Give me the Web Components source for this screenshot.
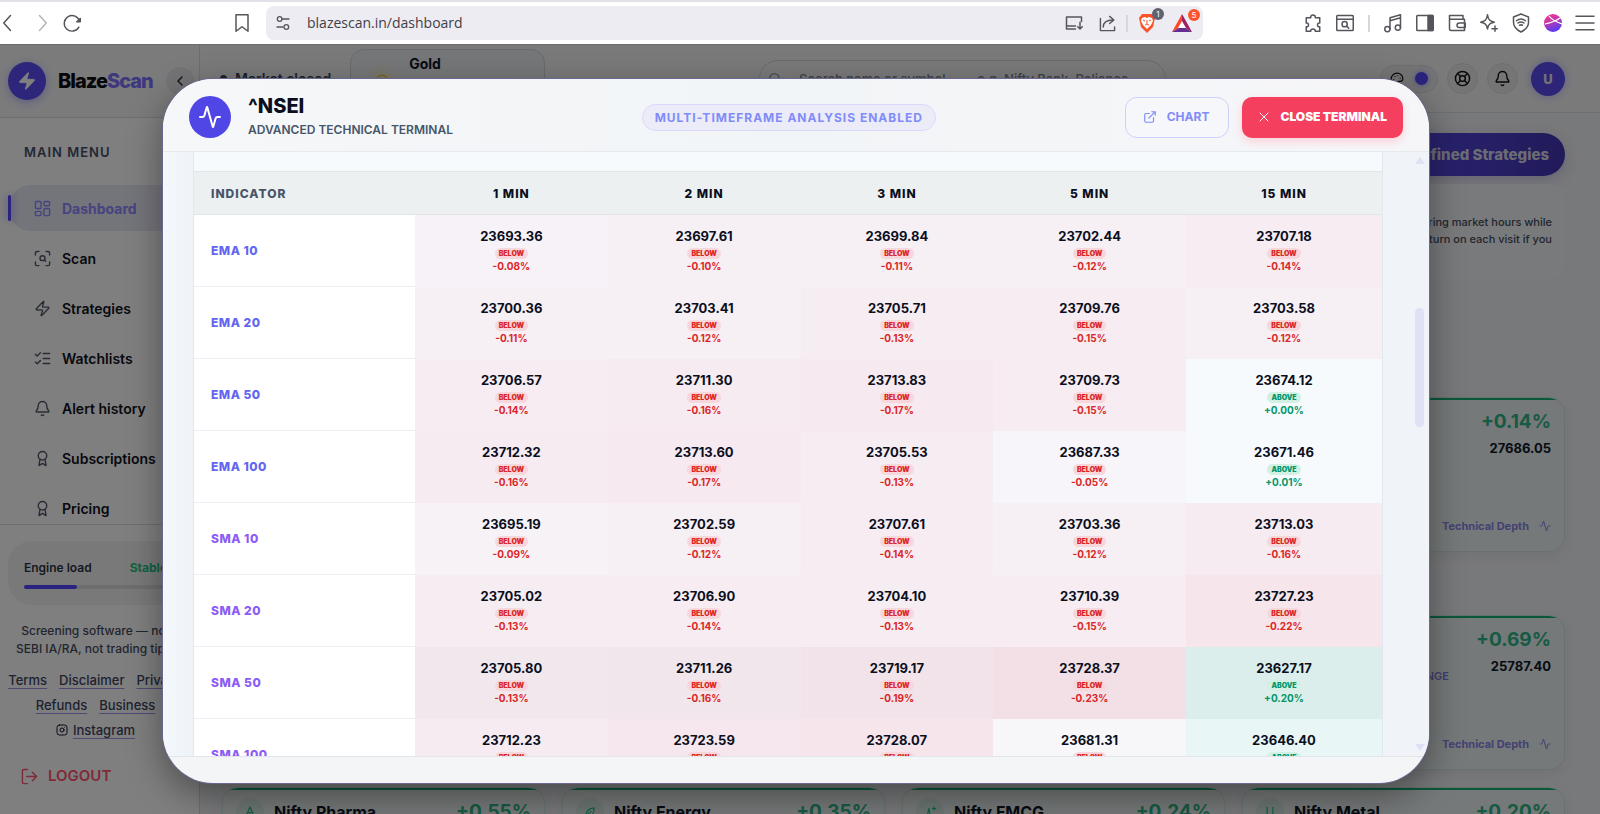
<!DOCTYPE html>
<html lang="en">
<head>
<meta charset="utf-8">
<meta name="viewport" content="width=device-width, initial-scale=1">
<title>BlazeScan</title>
<style>
    html, body {
        margin: 0;
        height: 100%;
    }

    body {
        display: flex;
        flex-direction: column;
        overflow: hidden;
        font-family: Inter, "Liberation Sans", sans-serif;
        color: #0f172a;
        background: #fff;
    }

    .app {
        position: relative;
        flex: 1;
        min-height: 0;
        display: flex;
        overflow: hidden;
        border-top: 1px solid #6d6d70;
    }

    market-page {
        flex: 1;
    }
</style>
</head>
<body>
    <browser-bar></browser-bar>
    <div class="app">
        <side-bar></side-bar>
        <market-page></market-page>
        <terminal-dialog symbol="^NSEI">
            <indicator-table></indicator-table>
        </terminal-dialog>
    </div>

<script>
const ICONS = {
    bolt: '<path d="M4 14a1 1 0 0 1-.78-1.63l9.9-10.2a.5.5 0 0 1 .86.46l-1.92 6.02A1 1 0 0 0 13 10h7a1 1 0 0 1 .78 1.63l-9.9 10.2a.5.5 0 0 1-.86-.46l1.92-6.02A1 1 0 0 0 11 14z"/>',
    left: '<path d="m15 18-6-6 6-6"/>',
    dashboard: '<rect x="2" y="2" width="8" height="10" rx="1.5"/><rect x="14" y="2" width="8" height="6" rx="1.5"/><rect x="14" y="12" width="8" height="10" rx="1.5"/><rect x="2" y="16" width="8" height="6" rx="1.5"/>',
    scan: '<path d="M2 7V4a2 2 0 0 1 2-2h3M17 2h3a2 2 0 0 1 2 2v3M22 17v3a2 2 0 0 1-2 2h-3M7 22H4a2 2 0 0 1-2-2v-3"/><circle cx="12" cy="11.500" r="3.500"/><path d="m16.500 16-2-2"/>',
    checks: '<path d="m2 17 2.500 2.500L9 15M2 6l2.500 2.500L9 4M13 5h9M13 12h9M13 19h9"/>',
    bell: '<path d="M10.268 21a2 2 0 0 0 3.464 0"/><path d="M3.262 15.326A1 1 0 0 0 4 17h16a1 1 0 0 0 .740-1.673C19.410 13.956 18 12.499 18 8A6 6 0 0 0 6 8c0 4.499-1.411 5.956-2.738 7.326"/>',
    award: '<circle cx="12" cy="8" r="6"/><path d="m8.500 13-1.500 9 5-3 5 3-1.500-9"/>',
    instagram: '<rect x="2" y="2" width="20" height="20" rx="5"/><circle cx="12" cy="12" r="4"/><path d="M17.500 6.500h.01"/>',
    logout: '<path d="M9 2H4a2 2 0 0 0-2 2v16a2 2 0 0 0 2 2h5M8 12h14M16 6l6 6-6 6"/>',
    pulse: '<path d="M22 12h-2.480a2 2 0 0 0-1.930 1.460l-2.350 8.360a.25.25 0 0 1-.48 0L9.240 2.180a.25.25 0 0 0-.48 0l-2.350 8.360A2 2 0 0 1 4.490 12H2"/>',
    external: '<path d="M15 3h6v6M10 14 21 3M18 13v6a2 2 0 0 1-2 2H5a2 2 0 0 1-2-2V8a2 2 0 0 1 2-2h6"/>',
    close: '<path d="M20 4 4 20M4 4l16 16"/>',
    search: '<circle cx="11" cy="11" r="8"/><path d="m21 21-4.300-4.300"/>',
    coin: '<circle cx="12" cy="12" r="10"/><path d="M12 7v10"/>',
    palette: '<path d="M12 2a10 10 0 0 0 0 20c1.200 0 2-.8 2-1.900 0-1.500-1-1.600-1-2.700 0-1 .8-1.400 1.800-1.400H17a5 5 0 0 0 5-5c0-5-4.500-9-10-9z"/><path d="M13.500 6.500h.01M17.500 10.500h.01M8.500 7.500h.01M6.500 12.500h.01"/>',
    buoy: '<circle cx="12" cy="12" r="10"/><circle cx="12" cy="12" r="4"/><path d="m5 5 4.200 4.200M14.800 9.200 19 5M14.800 14.800 19 19M9.200 14.800 5 19"/>',
    leaf: '<path d="M5 19c0-9 5-13 14-14 0 9-4 14-10 14-3 0-4-2-4-4M5 21c2-6 5-8 9-10"/>',
    peak: '<path d="M12 3 5 20M12 3l7 17M8 13h8"/>',
    sparkle: '<path d="M10 6 7 20M10 6l3 14M19 3v6M16 6h6"/>',
    tool: '<path d="M7 4v9a5 5 0 0 0 10 0V4"/>',
    back: '<path d="m14 2-9 10 9 10"/>',
    forward: '<path d="m10 2 9 10-9 10"/>',
    reload: '<path d="M21 17a11 11 0 1 1 1-8"/><path d="M18 9.500h5V5z" fill="currentColor"/>',
    bookmark: '<path d="M4 1h16v22l-8-6-8 6z"/>',
    tune: '<circle cx="7" cy="6" r="3.500"/><path d="M11 6h10M3 18h9"/><circle cx="17" cy="18" r="3.500"/>',
    install: '<path d="M22 10V4H2v16h12M2 16h12M20 11v9M17 17l3 3 3-3"/>',
    share: '<path d="M2 5v17h20v-5M6 17c0-7 5-10 14-10M15 2l6 5-6 5"/>',
    puzzle: '<path d="M3 5h6c-1-5 7-5 6 0h6v7c-4-1-4 6 0 5v6h-6c1-4-7-4-6 0H3v-6c4 1 4-6 0-5z"/>',
    finder: '<rect x="1" y="2" width="22" height="20" rx="1"/><path d="M1 7h22"/><circle cx="11.500" cy="13.500" r="3.500"/><path d="m14 16 3 3"/>',
    music: '<circle cx="4.500" cy="20" r="3.500"/><circle cx="18.500" cy="18" r="3.500"/><path d="M8 20V5l14-4v17M8 9l14-4"/>',
    panel: '<rect x="1" y="2" width="22" height="20" rx="1"/><path d="M16 2h6v20h-6z" fill="currentColor"/>',
    wallet: '<path d="M20 7V2H2v18q0 2 2 2h18V7H2M23 12h-8a3 3 0 0 0 0 6h8z"/>',
    stars: '<path d="M10 1c1 7 3 8 9 10-6 1-8 3-9 9-1-6-3-8-9-9 6-2 8-3 9-10zM20 16v7M16 19.500h7"/>',
    shield: '<path d="M12 0 22 4v7c0 6-4 10-10 13C6 21 2 17 2 11V4zM6 9c4-3 8-3 12 0M8 12c3-2 5-2 8 0M10 15c2-1 2-1 4 0"/>',
    menu: '<path d="M0 3h24M0 12h24M0 21h24"/>'
};

class UiIcon extends HTMLElement {
    constructor() {
        super();
        this.attachShadow({ mode: 'open' });
    }

    connectedCallback() {
        const size = this.getAttribute('size') || 16;
        this.shadowRoot.innerHTML = `
            <style>
                :host { display: inline-flex; flex: none; }
                svg { display: block; overflow: visible; }
            </style>
            <svg width="${size}" height="${size}" viewBox="0 0 24 24" aria-hidden="true"
                fill="${this.getAttribute('fill') || 'none'}" stroke="currentColor"
                stroke-width="${this.getAttribute('weight') || 2}"
                stroke-linecap="round" stroke-linejoin="round">${ICONS[this.getAttribute('name')]}</svg>
        `;
    }
}

customElements.define('ui-icon', UiIcon);

class BrowserBar extends HTMLElement {
    constructor() {
        super();
        this.attachShadow({ mode: 'open' }).innerHTML = `
            <style>
                :host {
                    display: flex;
                    align-items: center;
                    gap: 14px;
                    box-sizing: border-box;
                    height: 44px;
                    padding-right: 6px;
                    border-top: 2px solid #e1e1e8;
                    background: #fff;
                    color: #55565c;
                }
                button {
                    display: flex;
                    padding: 0;
                    border: 0;
                    background: none;
                    color: inherit;
                }
                button:disabled { color: #b4b5ba; }
                .mark { margin-left: 138px; }
                .address {
                    flex: 1;
                    display: flex;
                    align-items: center;
                    gap: 16px;
                    height: 34px;
                    margin: 0 87px 0 1px;
                    padding: 0 11px 0 9px;
                    border-radius: 8px;
                    background: #edecf2;
                }
                input {
                    flex: 1;
                    min-width: 0;
                    padding: 0;
                    border: 0;
                    outline: 0;
                    background: none;
                    color: #3f4047;
                    font: 14px/20px "Open Sans", "Noto Sans", sans-serif;
                }
                .rule {
                    width: 2px;
                    height: 17px;
                    background: #d6d6dd;
                }
                .address .rule { margin: 0 -6px; }
                .badged { position: relative; }
                .badged span {
                    position: absolute;
                    top: -5px;
                    right: -8px;
                    width: 12px;
                    height: 12px;
                    border-radius: 6px;
                    background: #5f6270;
                    color: #fff;
                    font: 8px/12px Inter, sans-serif;
                    text-align: center;
                }
                .badged .hot { background: #fb542b; }
            </style>
            <button aria-label="Back"><ui-icon name="back" size="18"></ui-icon></button>
            <button aria-label="Forward" disabled><ui-icon name="forward" size="18"></ui-icon></button>
            <button aria-label="Reload"><ui-icon name="reload" size="17"></ui-icon></button>
            <button class="mark" aria-label="Bookmark"><ui-icon name="bookmark" size="18"></ui-icon></button>
            <div class="address">
                <ui-icon name="tune" size="16"></ui-icon>
                <input type="text" aria-label="Address" value="blazescan.in/dashboard">
                <button aria-label="Install"><ui-icon name="install" size="18"></ui-icon></button>
                <button aria-label="Share"><ui-icon name="share" size="17"></ui-icon></button>
                <i class="rule"></i>
                <button class="badged" aria-label="Shields">
                    <svg width="18" height="20" viewBox="0 0 18 20">
                        <path d="M4 1h10l3 4-2 9-6 6-6-6L1 5z" fill="#fb542b"/>
                        <path d="m4 5 3-1 2 1 2-1 3 1 1 3-2 4-4 4-4-4-2-4z" fill="#fff"/>
                        <path d="m5 7 2 1M13 7l-2 1M9 7v4M7 12l2-1 2 1" stroke="#fb542b" fill="none"/>
                    </svg>
                    <span>1</span>
                </button>
                <button class="badged" aria-label="Rewards">
                    <svg width="20" height="18" viewBox="0 0 20 18">
                        <path d="M10 0 0 18l10-6z" fill="#ff4724"/>
                        <path d="m10 0 10 18-10-6z" fill="#9e1f63"/>
                        <path d="M0 18h20l-10-6z" fill="#662d91"/>
                        <path d="m10 7 4 7H6z" fill="#fff"/>
                    </svg>
                    <span class="hot">5</span>
                </button>
            </div>
            <button aria-label="Extensions"><ui-icon name="puzzle" size="18"></ui-icon></button>
            <button aria-label="Find in page"><ui-icon name="finder" size="18"></ui-icon></button>
            <i class="rule"></i>
            <button aria-label="Playlist"><ui-icon name="music" size="18"></ui-icon></button>
            <button aria-label="Side panel"><ui-icon name="panel" size="18"></ui-icon></button>
            <button aria-label="Wallet"><ui-icon name="wallet" size="18"></ui-icon></button>
            <button aria-label="Assistant"><ui-icon name="stars" size="18"></ui-icon></button>
            <button aria-label="VPN"><ui-icon name="shield" size="18"></ui-icon></button>
            <button aria-label="Profile">
                <svg width="18" height="18" viewBox="0 0 18 18">
                    <defs>
                        <linearGradient id="ball" x1="0" y1="0" x2="0.400" y2="1">
                            <stop offset="0.300" stop-color="#e0389a"/>
                            <stop offset="1" stop-color="#5a3cf0"/>
                        </linearGradient>
                    </defs>
                    <circle cx="9" cy="9" r="9" fill="url(#ball)"/>
                    <path d="M1 10C6 9 12 7 16 4M5 2c3 4 7 6 13 8" stroke="#fff" stroke-width="1.200" fill="none"/>
                </svg>
            </button>
            <button aria-label="Menu"><ui-icon name="menu" size="18"></ui-icon></button>
        `;
    }
}

customElements.define('browser-bar', BrowserBar);

class NavItem extends HTMLElement {
    constructor() {
        super();
        this.attachShadow({ mode: 'open' });
    }

    connectedCallback() {
        this.shadowRoot.innerHTML = `
            <style>
                :host {
                    position: relative;
                    display: block;
                }
                a {
                    display: flex;
                    align-items: center;
                    gap: 11px;
                    height: 46px;
                    padding-left: 26px;
                    border-radius: 23px;
                    color: #10131c;
                    font-size: 14px;
                    font-weight: 600;
                    text-decoration: none;
                }
                ui-icon { color: #55596a; }
                :host([active]) a {
                    background: #e8e8f6;
                    color: #8c88ff;
                    font-weight: 700;
                }
                :host([active]) ui-icon { color: #8c88ff; }
                :host([active])::before {
                    content: "";
                    position: absolute;
                    top: 10px;
                    width: 3px;
                    height: 26px;
                    border-radius: 2px;
                    background: #5446ff;
                    box-shadow: 0 0 8px #8a80ff;
                }
            </style>
            <a href="#"><ui-icon name="${this.getAttribute('icon')}" size="17"></ui-icon><slot></slot></a>
        `;
    }
}

customElements.define('nav-item', NavItem);

class SideBar extends HTMLElement {
    constructor() {
        super();
        this.attachShadow({ mode: 'open' }).innerHTML = `
            <style>
                :host {
                    display: flex;
                    flex-direction: column;
                    box-sizing: border-box;
                    width: 200px;
                    border-right: 1px solid #d8dae0;
                    background: #fff;
                }
                header {
                    flex: none;
                    display: flex;
                    align-items: center;
                    height: 72px;
                    padding: 0 5px 0 8px;
                    border-bottom: 1px solid #dcdee4;
                    background: #f6f7f9;
                }
                .logo {
                    display: grid;
                    place-items: center;
                    width: 38px;
                    height: 38px;
                    border-radius: 50%;
                    background: #5a4cf4;
                    box-shadow: 0 2px 10px #b9b2ff;
                    color: #fff;
                }
                .brand {
                    flex: 1;
                    margin-left: 12px;
                    font-size: 20px;
                    font-weight: 800;
                    letter-spacing: -1px;
                    color: #0b0d14;
                }
                .brand b { color: #7d70ff; font-weight: 800; }
                header button {
                    display: grid;
                    place-items: center;
                    width: 28px;
                    height: 28px;
                    padding: 0;
                    border: 0;
                    border-radius: 50%;
                    background: #e8e9ec;
                    color: #222;
                }
                nav {
                    flex: 1;
                    min-height: 0;
                    overflow: hidden;
                    padding: 24px 8px 0;
                }
                h2 {
                    margin: 0 0 23px 16px;
                    font-size: 13px;
                    font-weight: 600;
                    line-height: 20px;
                    letter-spacing: 1px;
                    color: #48506a;
                }
                nav-item + nav-item { margin-top: 4px; }
                footer {
                    flex: none;
                    padding: 16px 16px 27px 8px;
                    border-top: 1px solid #dcdee4;
                    text-align: center;
                }
                .load {
                    box-sizing: border-box;
                    height: 64px;
                    padding: 18px 16px 0;
                    border-radius: 24px;
                    background: #f2f2f3;
                }
                .load label {
                    display: flex;
                    justify-content: space-between;
                    font-size: 12px;
                    font-weight: 600;
                    line-height: 18px;
                    color: #2c3244;
                }
                .load span { color: #20c584; font-weight: 700; }
                .track {
                    height: 4px;
                    margin-top: 8px;
                    border-radius: 2px;
                    background: #dcdce0;
                }
                .track i {
                    display: block;
                    width: 37%;
                    height: 100%;
                    border-radius: 2px;
                    background: #5446ff;
                }
                p {
                    margin: 17px -8px 13px;
                    font-size: 12px;
                    font-weight: 500;
                    line-height: 18px;
                    color: #454c60;
                }
                .links {
                    display: flex;
                    flex-wrap: wrap;
                    justify-content: center;
                    gap: 7px 12px;
                    margin: 0 -8px;
                    font-size: 13px;
                    font-weight: 500;
                    line-height: 18px;
                }
                .links a {
                    color: #3d4560;
                    text-decoration: underline 1px #9b96e8;
                    text-underline-offset: 3px;
                }
                .insta {
                    display: flex;
                    align-items: center;
                    gap: 5px;
                }
                .out {
                    display: flex;
                    align-items: center;
                    gap: 10px;
                    margin: 26px 0 0 13px;
                    padding: 0;
                    border: 0;
                    background: none;
                    color: #ff5572;
                    font: 600 15px/22px Inter, sans-serif;
                }
            </style>
            <header>
                <span class="logo"><ui-icon name="bolt" size="20" fill="currentColor" weight="1"></ui-icon></span>
                <span class="brand">Blaze<b>Scan</b></span>
                <button aria-label="Collapse menu"><ui-icon name="left"></ui-icon></button>
            </header>
            <nav>
                <h2>MAIN MENU</h2>
                <nav-item icon="dashboard" active>Dashboard</nav-item>
                <nav-item icon="scan">Scan</nav-item>
                <nav-item icon="bolt">Strategies</nav-item>
                <nav-item icon="checks">Watchlists</nav-item>
                <nav-item icon="bell">Alert history</nav-item>
                <nav-item icon="award">Subscriptions</nav-item>
                <nav-item icon="award">Pricing</nav-item>
            </nav>
            <footer>
                <div class="load">
                    <label>Engine load <span>Stable</span></label>
                    <div class="track"><i></i></div>
                </div>
                <p>Screening software — not<br>SEBI IA/RA, not trading tips.</p>
                <div class="links">
                    <a href="#">Terms</a>
                    <a href="#">Disclaimer</a>
                    <a href="#">Privacy</a>
                    <a href="#">Refunds</a>
                    <a href="#">Business</a>
                    <span class="insta"><ui-icon name="instagram" size="12"></ui-icon><a href="#">Instagram</a></span>
                </div>
                <button class="out"><ui-icon name="logout" size="17"></ui-icon>LOGOUT</button>
            </footer>
        `;
    }
}

customElements.define('side-bar', SideBar);

class TopBar extends HTMLElement {
    constructor() {
        super();
        this.attachShadow({ mode: 'open' }).innerHTML = `
            <style>
                :host {
                    display: flex;
                    align-items: center;
                    gap: 9px;
                    height: 67px;
                    padding: 0 35px 0 20px;
                    border-bottom: 1px solid #dfe1e6;
                    background: #f4f5f7;
                }
                .status {
                    display: flex;
                    align-items: center;
                    gap: 8px;
                    font-size: 14px;
                    font-weight: 600;
                    color: #3c4358;
                }
                .status i {
                    width: 7px;
                    height: 7px;
                    border-radius: 50%;
                    background: #3c4358;
                }
                .ticker {
                    display: flex;
                    gap: 20px;
                    box-sizing: border-box;
                    width: 195px;
                    height: 60px;
                    margin-left: 10px;
                    padding: 5px 0 0 24px;
                    border: 1px solid #d3d5da;
                    border-radius: 14px;
                    background: #edeef0;
                    font-size: 14px;
                    font-weight: 700;
                    line-height: 18px;
                }
                .ticker ui-icon {
                    align-self: center;
                    color: #f5c518;
                    border-radius: 50%;
                    box-shadow: 0 0 14px #ffe9a0;
                }
                .search {
                    flex: 0 1 407px;
                    display: flex;
                    align-items: center;
                    gap: 17px;
                    box-sizing: border-box;
                    height: 38px;
                    margin: 0 auto;
                    padding: 0 8px;
                    border: 1px solid #d3d5da;
                    border-radius: 19px;
                    color: #6b7080;
                }
                input {
                    flex: 1;
                    min-width: 0;
                    padding: 0;
                    border: 0;
                    background: none;
                    font: 500 13px/18px Inter, sans-serif;
                }
                input::placeholder { color: #7c8090; }
                button {
                    display: flex;
                    align-items: center;
                    justify-content: center;
                    gap: 11px;
                    box-sizing: border-box;
                    width: 31px;
                    height: 31px;
                    padding: 0;
                    border: 1px solid #dcdde1;
                    border-radius: 16px;
                    background: #eaebed;
                    color: #111;
                }
                .theme { width: 58px; height: 28px; }
                .theme i {
                    width: 13px;
                    height: 13px;
                    border-radius: 50%;
                    background: #5446ff;
                    box-shadow: 0 0 6px #9a92ff;
                }
                .user {
                    width: 34px;
                    height: 34px;
                    margin-left: 4px;
                    border: 0;
                    border-radius: 50%;
                    background: #5a4cf0;
                    box-shadow: 0 0 8px #b9b2ff;
                    color: #e6e6ea;
                    font: 800 13px/18px Inter, sans-serif;
                }
            </style>
            <span class="status"><i></i>Market closed</span>
            <div class="ticker"><ui-icon name="coin" size="14"></ui-icon>Gold</div>
            <label class="search">
                <ui-icon name="search" size="14"></ui-icon>
                <input type="text" aria-label="Search" placeholder="Search name or symbol... — e.g. Nifty Bank, Reliance">
            </label>
            <button class="theme" aria-label="Theme"><ui-icon name="palette" size="14"></ui-icon><i></i></button>
            <button aria-label="Help"><ui-icon name="buoy" size="17"></ui-icon></button>
            <button aria-label="Notifications"><ui-icon name="bell" size="17"></ui-icon></button>
            <button class="user">U</button>
        `;
    }
}

customElements.define('top-bar', TopBar);

class IndexCard extends HTMLElement {
    constructor() {
        super();
        this.attachShadow({ mode: 'open' });
    }

    connectedCallback() {
        const icon = this.getAttribute('icon');
        const price = this.getAttribute('price');
        this.shadowRoot.innerHTML = `
            <style>
                :host {
                    display: flex;
                    flex-direction: column;
                    box-sizing: border-box;
                    height: 155px;
                    padding: 12px 13px 17px;
                    border: 1px solid #d0e6de;
                    border-radius: 16px;
                    background: linear-gradient(#14b074, #14b074) 0 0 / 100% 3px no-repeat border-box #edf3f2;
                    box-shadow: 0 4px 12px #e2e4e8;
                }
                .row {
                    display: flex;
                    align-items: center;
                    gap: 10px;
                }
                .icon {
                    display: grid;
                    place-items: center;
                    width: 28px;
                    height: 28px;
                    border-radius: 50%;
                    background: #d9ebe5;
                    color: #1ec084;
                }
                strong {
                    font-size: 16px;
                    font-weight: 700;
                    line-height: 22px;
                }
                .change {
                    margin-left: auto;
                    color: #2fb588;
                    font-size: 19px;
                    font-weight: 700;
                    line-height: 24px;
                }
                .icon, .icon ~ * { margin-top: -2px; }
                .price {
                    margin-top: 5px;
                    text-align: right;
                    font-size: 13px;
                    font-weight: 700;
                    line-height: 18px;
                }
                .tag {
                    align-self: flex-end;
                    margin: -6px 102px 0 0;
                    color: #7f7ce0;
                    font-size: 11px;
                    font-weight: 600;
                    line-height: 14px;
                }
                a {
                    display: flex;
                    align-items: center;
                    justify-content: flex-end;
                    gap: 10px;
                    margin-top: auto;
                    color: #8784e6;
                    font-size: 11px;
                    font-weight: 700;
                    line-height: 16px;
                    text-decoration: none;
                }
            </style>
            <div class="row">
                ${icon ? `<span class="icon"><ui-icon name="${icon}" size="14"></ui-icon></span>` : ''}
                <strong><slot></slot></strong>
                <span class="change">${this.getAttribute('change')}</span>
            </div>
            ${price ? `<span class="price">${price}</span>` : ''}
            ${this.hasAttribute('tag') ? `<span class="tag">${this.getAttribute('tag')}</span>` : ''}
            ${price ? '<a href="#">Technical Depth<ui-icon name="pulse" size="12"></ui-icon></a>' : ''}
        `;
    }
}

customElements.define('index-card', IndexCard);

class MarketPage extends HTMLElement {
    constructor() {
        super();
        this.attachShadow({ mode: 'open' }).innerHTML = `
            <style>
                :host {
                    display: block;
                    min-width: 0;
                    overflow: hidden;
                    background: #f1f2f5;
                }
                main {
                    display: flex;
                    flex-direction: column;
                    padding: 20px 35px 0 22px;
                }
                .strategies {
                    align-self: flex-end;
                    height: 43px;
                    padding: 0 16px;
                    border: 0;
                    border-radius: 22px;
                    background: linear-gradient(90deg, #5a4cf0, #4236b4);
                    box-shadow: 0 4px 14px #c8c6e6;
                    color: #d8d8e8;
                    font: 800 15px/20px Inter, sans-serif;
                }
                .notice {
                    height: 65px;
                    margin: 8px 0 118px;
                    padding: 30px 13px 0;
                    border-radius: 16px;
                    background: #f3f4f6;
                    color: #454c60;
                    font-size: 11px;
                    font-weight: 500;
                    line-height: 17px;
                    text-align: right;
                }
                .grid {
                    display: grid;
                    grid-template-columns: repeat(4, 1fr);
                    gap: 17px;
                }
                .lead { margin-bottom: 63px; }
                .last { grid-column: 4; }
            </style>
            <top-bar></top-bar>
            <main>
                <button class="strategies">Predefined Strategies</button>
                <div class="notice">during market hours while<br>return on each visit if you</div>
                <section class="grid lead">
                    <index-card class="last" change="+0.14%" price="27686.05"></index-card>
                </section>
                <section class="grid">
                    <index-card class="last" change="+0.69%" price="25787.40" tag="EXCHANGE"></index-card>
                    <index-card icon="peak" change="+0.55%">Nifty Pharma</index-card>
                    <index-card icon="leaf" change="+0.35%">Nifty Energy</index-card>
                    <index-card icon="sparkle" change="+0.24%">Nifty FMCG</index-card>
                    <index-card icon="tool" change="+0.20%">Nifty Metal</index-card>
                </section>
            </main>
        `;
    }
}

customElements.define('market-page', MarketPage);

class TerminalDialog extends HTMLElement {
    constructor() {
        super();
        this.attachShadow({ mode: 'open' });
    }

    connectedCallback() {
        this.shadowRoot.innerHTML = `
            <style>
                :host {
                    position: absolute;
                    inset: 0;
                    display: flex;
                    padding: 34px 171px 31px 163px;
                    background: rgba(0, 0, 0, 0.5);
                }
                .panel {
                    flex: 1;
                    min-width: 0;
                    display: flex;
                    flex-direction: column;
                    overflow: hidden;
                    border-radius: 50px;
                    background: #f3f5f7;
                    box-shadow: 0 0 0 1px #6a6790, 0 12px 36px rgba(0, 0, 0, 0.4);
                }
                header {
                    display: flex;
                    align-items: center;
                    justify-content: space-between;
                    padding: 17px 26px 13px 26px;
                    border-bottom: 1px solid #e6e9ed;
                    background: linear-gradient(90deg, #f5f7f9, #f2f5f7 50%, #f6f6f9);
                }
                .mark {
                    display: grid;
                    place-items: center;
                    width: 42px;
                    height: 42px;
                    margin-right: 17px;
                    border-radius: 50%;
                    background: #4f46e5;
                    color: #fff;
                }
                .side {
                    display: flex;
                    align-items: center;
                }
                .end { gap: 13px; }
                h1 {
                    margin: 0 0 6px;
                    font-size: 20px;
                    font-weight: 800;
                    line-height: 20px;
                    color: #0b0f1d;
                }
                small {
                    display: block;
                    font-size: 12px;
                    font-weight: 600;
                    line-height: 16px;
                    color: #475569;
                }
                .pill {
                    padding: 0 12px;
                    border: 1px solid #d9d9fb;
                    border-radius: 14px;
                    background: #ebecf8;
                    color: #818cf8;
                    font-size: 12px;
                    font-weight: 700;
                    line-height: 25px;
                    letter-spacing: 1px;
                }
                button {
                    display: flex;
                    align-items: center;
                    box-sizing: border-box;
                    height: 41px;
                    padding: 0 16px;
                    gap: 10px;
                    border: 0;
                    border-radius: 10px;
                    background: #f43f5e;
                    box-shadow: 0 4px 10px #f9d3da;
                    color: #fff;
                    font: 900 12px/18px Inter, sans-serif;
                }
                .chart {
                    padding: 0 19px 0 17px;
                    border: 1px solid #cdd2fb;
                    border-radius: 12px;
                    background: #f6f7fb;
                    box-shadow: none;
                    color: #818cf8;
                    font-weight: 700;
                }
                .body {
                    flex: 1;
                    min-height: 0;
                    display: flex;
                    overflow: hidden;
                    background: linear-gradient(90deg, #f4f8fc, #eef3f8 30px, #f0f4f9);
                }
                .content {
                    flex: 1;
                    min-width: 0;
                    padding: 0 32px 0 30px;
                }
                .bar {
                    display: flex;
                    flex-direction: column;
                    align-items: center;
                    width: 9px;
                    margin-right: 5px;
                    padding: 5px 0;
                }
                .bar i {
                    border: 5px solid transparent;
                    border-top: 0;
                    border-bottom: 7px solid #dfdff6;
                }
                .bar i:last-child {
                    margin-top: auto;
                    border-top: 7px solid #dfdff6;
                    border-bottom: 0;
                }
                .thumb {
                    width: 9px;
                    height: 20%;
                    margin-top: 144px;
                    border-radius: 5px;
                    background: #e0e0f6;
                }
                footer {
                    height: 26px;
                    border-top: 1px solid #e2e6ea;
                }
            </style>
            <section class="panel" role="dialog" aria-label="Technical terminal">
                <header>
                    <div class="side">
                        <span class="mark"><ui-icon name="pulse" size="24"></ui-icon></span>
                        <div>
                            <h1>${this.getAttribute('symbol')}</h1>
                            <small>ADVANCED TECHNICAL TERMINAL</small>
                        </div>
                    </div>
                    <span class="pill">MULTI-TIMEFRAME ANALYSIS ENABLED</span>
                    <div class="side end">
                        <button class="chart"><ui-icon name="external" size="14"></ui-icon>CHART</button>
                        <button><ui-icon name="close" size="12"></ui-icon>CLOSE TERMINAL</button>
                    </div>
                </header>
                <div class="body">
                    <div class="content"><slot></slot></div>
                    <div class="bar"><i></i><span class="thumb"></span><i></i></div>
                </div>
                <footer></footer>
            </section>
        `;
    }
}

customElements.define('terminal-dialog', TerminalDialog);

const FRAMES = ['1 MIN', '2 MIN', '3 MIN', '5 MIN', '15 MIN'];

const ROWS = [
    ['EMA 10', '23693.36 -0.08', '23697.61 -0.10', '23699.84 -0.11', '23702.44 -0.12', '23707.18 -0.14'],
    ['EMA 20', '23700.36 -0.11', '23703.41 -0.12', '23705.71 -0.13', '23709.76 -0.15', '23703.58 -0.12'],
    ['EMA 50', '23706.57 -0.14', '23711.30 -0.16', '23713.83 -0.17', '23709.73 -0.15', '23674.12 +0.00'],
    ['EMA 100', '23712.32 -0.16', '23713.60 -0.17', '23705.53 -0.13', '23687.33 -0.05', '23671.46 +0.01'],
    ['SMA 10', '23695.19 -0.09', '23702.59 -0.12', '23707.61 -0.14', '23703.36 -0.12', '23713.03 -0.16'],
    ['SMA 20', '23705.02 -0.13', '23706.90 -0.14', '23704.10 -0.13', '23710.39 -0.15', '23727.23 -0.22'],
    ['SMA 50', '23705.80 -0.13', '23711.26 -0.16', '23719.17 -0.19', '23728.37 -0.23', '23627.17 +0.20'],
    ['SMA 100', '23712.23 -0.16', '23723.59 -0.20', '23728.07 -0.22', '23681.31 -0.03', '23646.40 +0.12']
];

class IndicatorTable extends HTMLElement {
    constructor() {
        super();
        this.attachShadow({ mode: 'open' });
    }

    // the further a price is from its average, the stronger the tint
    cell(text) {
        const [price, change] = text.split(' ');
        const below = change.startsWith('-');
        const alpha = (Math.abs(change) / 2).toFixed(3);
        const tint = below ? `rgba(244, 63, 94, ${alpha})` : `rgba(16, 185, 129, ${alpha})`;
        return `
            <td class="${below ? 'below' : 'above'}" style="background-color: ${tint}">
                <b>${price}</b>
                <mark>${below ? 'BELOW' : 'ABOVE'}</mark>
                <em>${change}%</em>
            </td>`;
    }

    connectedCallback() {
        this.shadowRoot.innerHTML = `
            <style>
                :host {
                    display: block;
                    padding-top: 19px;
                    border: solid #e2e8f0;
                    border-width: 0 1px 1px;
                    border-radius: 0 0 16px 16px;
                    background: #f7fafd;
                }
                table {
                    width: 100%;
                    table-layout: fixed;
                    border-collapse: separate;
                    border-spacing: 0;
                }
                .name { width: 221px; }
                .wide { width: 196px; }
                thead th {
                    box-sizing: border-box;
                    height: 44px;
                    padding: 0;
                    border: solid #e1e5e9;
                    border-width: 1px 0;
                    background: #edf0f1;
                    font-size: 12px;
                    font-weight: 800;
                    letter-spacing: 1px;
                    color: #0b0f1d;
                }
                th:first-child {
                    box-sizing: border-box;
                    padding-left: 17px;
                    text-align: left;
                }
                thead th:first-child { color: #475569; }
                tbody th {
                    border-bottom: 1px solid #eceef1;
                    background: #fff;
                    color: #6366f1;
                    font-size: 12px;
                    font-weight: 800;
                    letter-spacing: 0.5px;
                }
                tbody .sma th { color: #8b5cf6; }
                td {
                    box-sizing: border-box;
                    height: 72px;
                    padding: 0 0 4px;
                    text-align: center;
                }
                tbody .hover td {
                    background-image: linear-gradient(rgba(0, 0, 0, 0.02), rgba(0, 0, 0, 0.02));
                }
                b, mark, em {
                    display: block;
                    font-style: normal;
                }
                b {
                    color: #0b0f1d;
                    font-size: 13px;
                    font-weight: 700;
                    line-height: 20px;
                }
                mark {
                    width: fit-content;
                    margin: 2px auto 1px;
                    padding: 0 4px;
                    border-radius: 6px;
                    background: #f7d7dc;
                    color: #dc2626;
                    font-size: 7px;
                    font-weight: 900;
                    line-height: 11px;
                }
                em {
                    color: #dc2626;
                    font-size: 10px;
                    font-weight: 700;
                    line-height: 13px;
                }
                .above mark { background: #d2f0e4; color: #059669; }
                .above em { color: #059669; }
            </style>
            <table>
                <thead>
                    <tr>
                        <th class="name">INDICATOR</th>
                        ${FRAMES.map((name, i) => `<th${i === 4 ? ' class="wide"' : ''}>${name}</th>`).join('')}
                    </tr>
                </thead>
                <tbody>
                    ${ROWS.map(([name, ...cells]) => `
                        <tr class="${name.startsWith('SMA') ? 'sma' : ''} ${name === 'SMA 50' ? 'hover' : ''}">
                            <th>${name}</th>
                            ${cells.map((text) => this.cell(text)).join('')}
                        </tr>`).join('')}
                </tbody>
            </table>
        `;
    }
}

customElements.define('indicator-table', IndicatorTable);
</script>
</body>
</html>
